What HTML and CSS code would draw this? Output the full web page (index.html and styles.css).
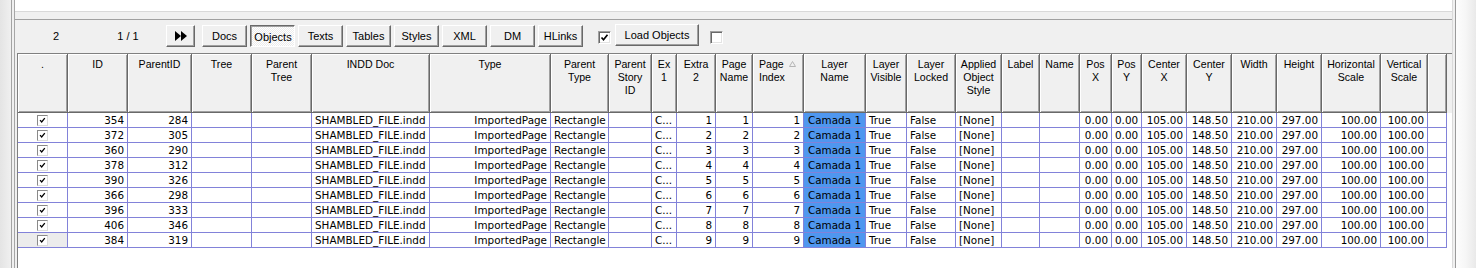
FILE: index.html
```html
<!DOCTYPE html>
<html>
<head>
<meta charset="utf-8">
<link rel="stylesheet" href="styles.css">
</head>
<body>
<div class="app">
  <div class="lside"></div>
  <div class="gap2"></div>
  <div class="main">
    <div class="memo"></div>
    <div class="spacer"></div>
    <div class="panel">
      <div class="toolbar">
        <div class="lbl lbl1">2</div>
        <div class="lbl lbl2">1 / 1</div>
        <div class="btn btn-nav"><svg width="12" height="10" viewBox="0 0 12 10"><polygon points="0,0 6,5 0,10"/><polygon points="6,0 12,5 6,10"/></svg></div>
        <div class="btn first">Docs</div>
        <div class="btn down">Objects</div>
        <div class="btn">Texts</div>
        <div class="btn">Tables</div>
        <div class="btn">Styles</div>
        <div class="btn">XML</div>
        <div class="btn">DM</div>
        <div class="btn">HLinks</div>
        <div class="tcb on"><svg viewBox="0 0 11 11"><path d="M2.5 5.5l2 2.2 4-5"/></svg></div>
        <div class="btn load">Load Objects</div>
        <div class="tcb off"></div>
      </div>
      <div class="grid">
        <div class="hrow">
          <div class="hc">.</div>
          <div class="hc">ID</div>
          <div class="hc">ParentID</div>
          <div class="hc">Tree</div>
          <div class="hc">Parent<br>Tree</div>
          <div class="hc">INDD Doc</div>
          <div class="hc">Type</div>
          <div class="hc">Parent<br>Type</div>
          <div class="hc">Parent<br>Story<br>ID</div>
          <div class="hc">Ex<br>1</div>
          <div class="hc">Extra<br>2</div>
          <div class="hc">Page<br>Name</div>
          <div class="hc hl-left">Page <svg class="sort" width="7" height="6" viewBox="0 0 7 6"><polygon points="3.5,0.5 6.5,5.5 0.5,5.5"/></svg><br>Index</div>
          <div class="hc">Layer<br>Name</div>
          <div class="hc">Layer<br>Visible</div>
          <div class="hc">Layer<br>Locked</div>
          <div class="hc">Applied<br>Object<br>Style</div>
          <div class="hc">Label</div>
          <div class="hc">Name</div>
          <div class="hc">Pos<br>X</div>
          <div class="hc">Pos<br>Y</div>
          <div class="hc">Center<br>X</div>
          <div class="hc">Center<br>Y</div>
          <div class="hc">Width</div>
          <div class="hc">Height</div>
          <div class="hc">Horizontal<br>Scale</div>
          <div class="hc">Vertical<br>Scale</div>
          <div class="hc"></div>
          <div class="hfill"></div>
        </div>

        <div class="drow">
          <div class="c ctr"><span class="cb"><svg viewBox="0 0 11 11"><path d="M2.5 5l2 2.2 3.8-4.6"/></svg></span></div>
          <div class="c r">354</div><div class="c r">284</div><div class="c"></div><div class="c"></div>
          <div class="c">SHAMBLED_FILE.indd</div><div class="c r">ImportedPage</div><div class="c">Rectangle</div><div class="c"></div><div class="c">C...</div>
          <div class="c r">1</div><div class="c r">1</div><div class="c r">1</div>
          <div class="c hl">Camada 1</div><div class="c">True</div><div class="c">False</div><div class="c">[None]</div><div class="c"></div><div class="c"></div>
          <div class="c r">0.00</div><div class="c r">0.00</div><div class="c r">105.00</div><div class="c r">148.50</div><div class="c r">210.00</div><div class="c r">297.00</div><div class="c r">100.00</div><div class="c r">100.00</div><div class="c"></div>
        </div>
        <div class="drow">
          <div class="c ctr"><span class="cb"><svg viewBox="0 0 11 11"><path d="M2.5 5l2 2.2 3.8-4.6"/></svg></span></div>
          <div class="c r">372</div><div class="c r">305</div><div class="c"></div><div class="c"></div>
          <div class="c">SHAMBLED_FILE.indd</div><div class="c r">ImportedPage</div><div class="c">Rectangle</div><div class="c"></div><div class="c">C...</div>
          <div class="c r">2</div><div class="c r">2</div><div class="c r">2</div>
          <div class="c hl">Camada 1</div><div class="c">True</div><div class="c">False</div><div class="c">[None]</div><div class="c"></div><div class="c"></div>
          <div class="c r">0.00</div><div class="c r">0.00</div><div class="c r">105.00</div><div class="c r">148.50</div><div class="c r">210.00</div><div class="c r">297.00</div><div class="c r">100.00</div><div class="c r">100.00</div><div class="c"></div>
        </div>
        <div class="drow">
          <div class="c ctr"><span class="cb"><svg viewBox="0 0 11 11"><path d="M2.5 5l2 2.2 3.8-4.6"/></svg></span></div>
          <div class="c r">360</div><div class="c r">290</div><div class="c"></div><div class="c"></div>
          <div class="c">SHAMBLED_FILE.indd</div><div class="c r">ImportedPage</div><div class="c">Rectangle</div><div class="c"></div><div class="c">C...</div>
          <div class="c r">3</div><div class="c r">3</div><div class="c r">3</div>
          <div class="c hl">Camada 1</div><div class="c">True</div><div class="c">False</div><div class="c">[None]</div><div class="c"></div><div class="c"></div>
          <div class="c r">0.00</div><div class="c r">0.00</div><div class="c r">105.00</div><div class="c r">148.50</div><div class="c r">210.00</div><div class="c r">297.00</div><div class="c r">100.00</div><div class="c r">100.00</div><div class="c"></div>
        </div>
        <div class="drow">
          <div class="c ctr"><span class="cb"><svg viewBox="0 0 11 11"><path d="M2.5 5l2 2.2 3.8-4.6"/></svg></span></div>
          <div class="c r">378</div><div class="c r">312</div><div class="c"></div><div class="c"></div>
          <div class="c">SHAMBLED_FILE.indd</div><div class="c r">ImportedPage</div><div class="c">Rectangle</div><div class="c"></div><div class="c">C...</div>
          <div class="c r">4</div><div class="c r">4</div><div class="c r">4</div>
          <div class="c hl">Camada 1</div><div class="c">True</div><div class="c">False</div><div class="c">[None]</div><div class="c"></div><div class="c"></div>
          <div class="c r">0.00</div><div class="c r">0.00</div><div class="c r">105.00</div><div class="c r">148.50</div><div class="c r">210.00</div><div class="c r">297.00</div><div class="c r">100.00</div><div class="c r">100.00</div><div class="c"></div>
        </div>
        <div class="drow">
          <div class="c ctr"><span class="cb"><svg viewBox="0 0 11 11"><path d="M2.5 5l2 2.2 3.8-4.6"/></svg></span></div>
          <div class="c r">390</div><div class="c r">326</div><div class="c"></div><div class="c"></div>
          <div class="c">SHAMBLED_FILE.indd</div><div class="c r">ImportedPage</div><div class="c">Rectangle</div><div class="c"></div><div class="c">C...</div>
          <div class="c r">5</div><div class="c r">5</div><div class="c r">5</div>
          <div class="c hl">Camada 1</div><div class="c">True</div><div class="c">False</div><div class="c">[None]</div><div class="c"></div><div class="c"></div>
          <div class="c r">0.00</div><div class="c r">0.00</div><div class="c r">105.00</div><div class="c r">148.50</div><div class="c r">210.00</div><div class="c r">297.00</div><div class="c r">100.00</div><div class="c r">100.00</div><div class="c"></div>
        </div>
        <div class="drow">
          <div class="c ctr"><span class="cb"><svg viewBox="0 0 11 11"><path d="M2.5 5l2 2.2 3.8-4.6"/></svg></span></div>
          <div class="c r">366</div><div class="c r">298</div><div class="c"></div><div class="c"></div>
          <div class="c">SHAMBLED_FILE.indd</div><div class="c r">ImportedPage</div><div class="c">Rectangle</div><div class="c"></div><div class="c">C...</div>
          <div class="c r">6</div><div class="c r">6</div><div class="c r">6</div>
          <div class="c hl">Camada 1</div><div class="c">True</div><div class="c">False</div><div class="c">[None]</div><div class="c"></div><div class="c"></div>
          <div class="c r">0.00</div><div class="c r">0.00</div><div class="c r">105.00</div><div class="c r">148.50</div><div class="c r">210.00</div><div class="c r">297.00</div><div class="c r">100.00</div><div class="c r">100.00</div><div class="c"></div>
        </div>
        <div class="drow">
          <div class="c ctr"><span class="cb"><svg viewBox="0 0 11 11"><path d="M2.5 5l2 2.2 3.8-4.6"/></svg></span></div>
          <div class="c r">396</div><div class="c r">333</div><div class="c"></div><div class="c"></div>
          <div class="c">SHAMBLED_FILE.indd</div><div class="c r">ImportedPage</div><div class="c">Rectangle</div><div class="c"></div><div class="c">C...</div>
          <div class="c r">7</div><div class="c r">7</div><div class="c r">7</div>
          <div class="c hl">Camada 1</div><div class="c">True</div><div class="c">False</div><div class="c">[None]</div><div class="c"></div><div class="c"></div>
          <div class="c r">0.00</div><div class="c r">0.00</div><div class="c r">105.00</div><div class="c r">148.50</div><div class="c r">210.00</div><div class="c r">297.00</div><div class="c r">100.00</div><div class="c r">100.00</div><div class="c"></div>
        </div>
        <div class="drow">
          <div class="c ctr"><span class="cb"><svg viewBox="0 0 11 11"><path d="M2.5 5l2 2.2 3.8-4.6"/></svg></span></div>
          <div class="c r">406</div><div class="c r">346</div><div class="c"></div><div class="c"></div>
          <div class="c">SHAMBLED_FILE.indd</div><div class="c r">ImportedPage</div><div class="c">Rectangle</div><div class="c"></div><div class="c">C...</div>
          <div class="c r">8</div><div class="c r">8</div><div class="c r">8</div>
          <div class="c hl">Camada 1</div><div class="c">True</div><div class="c">False</div><div class="c">[None]</div><div class="c"></div><div class="c"></div>
          <div class="c r">0.00</div><div class="c r">0.00</div><div class="c r">105.00</div><div class="c r">148.50</div><div class="c r">210.00</div><div class="c r">297.00</div><div class="c r">100.00</div><div class="c r">100.00</div><div class="c"></div>
        </div>
        <div class="drow">
          <div class="c ctr cur"><span class="cb"><svg viewBox="0 0 11 11"><path d="M2.5 5l2 2.2 3.8-4.6"/></svg></span></div>
          <div class="c r">384</div><div class="c r">319</div><div class="c"></div><div class="c"></div>
          <div class="c">SHAMBLED_FILE.indd</div><div class="c r">ImportedPage</div><div class="c">Rectangle</div><div class="c"></div><div class="c">C...</div>
          <div class="c r">9</div><div class="c r">9</div><div class="c r">9</div>
          <div class="c hl">Camada 1</div><div class="c">True</div><div class="c">False</div><div class="c">[None]</div><div class="c"></div><div class="c"></div>
          <div class="c r">0.00</div><div class="c r">0.00</div><div class="c r">105.00</div><div class="c r">148.50</div><div class="c r">210.00</div><div class="c r">297.00</div><div class="c r">100.00</div><div class="c r">100.00</div><div class="c"></div>
        </div>
      </div>
    </div>
  </div>
  <div class="rside">
    <div class="rgap"></div>
    <div class="rline"></div>
    <div class="rshade"></div>
  </div>
</div>
</body>
</html>
```

FILE: styles.css
```css
* { box-sizing: border-box; }

body {
  margin: 0;
  width: 1476px;
  height: 268px;
  overflow: hidden;
  background: #f0f0f0;
  font-family: "Liberation Sans", Arial, sans-serif;
  font-size: 11px;
  color: #000;
}

.app {
  display: flex;
  height: 268px;
}

.lside {
  width: 12px;
  background: linear-gradient(to right, #e4e4e4, #f0f0f0);
  border-right: 1px solid #a3a3a3;
}

.gap2 {
  width: 2px;
  background: #f0f0f0;
}

.main {
  width: 1439px;
  display: flex;
  flex-direction: column;
  border-left: 1px solid #a6a6a6;
  border-right: 1px solid #dadada;
}

.memo {
  height: 12px;
  background: #fff;
  border-bottom: 1px solid #d9d9d9;
}

.spacer {
  height: 7px;
}

.panel {
  flex: 1;
  display: flex;
  flex-direction: column;
  border-top: 1px solid #a0a0a0;
  min-height: 0;
}

.toolbar {
  height: 33px;
  display: flex;
  align-items: flex-start;
  padding-top: 5px;
}

.lbl {
  height: 22px;
  line-height: 22px;
  text-align: center;
  font-size: 11px;
}

.lbl1 { width: 82px; }
.lbl2 { width: 62px; }

.btn {
  width: 45px;
  height: 22px;
  margin-left: 3px;
  display: flex;
  align-items: center;
  justify-content: center;
  background: #f0f0f0;
  border: 1px solid;
  border-color: #fff #696969 #696969 #fff;
  box-shadow: inset -1px -1px 0 #a0a0a0;
  font-size: 11px;
}

.btn-nav {
  width: 29px;
  margin-left: 7px;
}

.btn-nav svg { fill: #000; margin-left: 1px; }

.btn.first { margin-left: 7px; }

.btn.down {
  border-color: #696969 #fff #fff #696969;
  box-shadow: inset 1px 1px 0 #a0a0a0;
  background: repeating-conic-gradient(#fff 0 25%, #ececec 0 50%) 0 0 / 2px 2px;
  padding: 2px 0 0 1px;
}

.btn.load {
  width: 84px;
  margin-left: 4px;
  margin-top: -1px;
}

.tcb {
  width: 13px;
  height: 13px;
  margin-top: 6px;
  background: #fff;
  border: 1px solid;
  border-color: #a0a0a0 #fff #fff #a0a0a0;
  box-shadow: inset 1px 1px 0 #696969, inset -1px -1px 0 #e3e3e3;
}

.tcb.on { margin-left: 15px; }
.tcb.off { margin-left: 11px; }

.tcb svg {
  display: block;
  width: 11px;
  height: 11px;
  fill: none;
  stroke: #000;
  stroke-width: 1.7;
}

.grid {
  flex: 1;
  margin-left: 2px;
  background: #fff;
  border-left: 1px solid #808080;
  border-top: 1px solid #808080;
  --cols: 50px 60px 64px 60px 60px 118px 121px 58px 43px 25px 39px 37px 51px 62px 41px 49px 46px 38px 40px 32px 30px 45px 45px 45px 45px 59px 47px 19px;
}

.hrow {
  display: grid;
  grid-template-columns: var(--cols) 1fr;
  height: 59px;
  background: #f0f0f0;
}

.hc {
  height: 59px;
  border-right: 1px solid #696969;
  border-bottom: 1px solid #696969;
  box-shadow: inset 1px 1px 0 #fff, inset -1px -1px 0 #a0a0a0;
  text-align: center;
  font-size: 10.6px;
  line-height: 13px;
  padding-top: 4px;
  white-space: nowrap;
  overflow: hidden;
}

.hc.hl-left {
  text-align: left;
  padding-left: 6px;
}

.sort {
  fill: none;
  stroke: #b4b4b4;
  stroke-width: 1;
  margin-left: 2px;
  vertical-align: 1px;
}

.hfill { background: #f0f0f0; }

.drow {
  display: grid;
  grid-template-columns: var(--cols);
  height: 15px;
}

.c {
  height: 15px;
  border-right: 1px solid #8282d9;
  border-bottom: 1px solid #8282d9;
  font-family: "DejaVu Sans", Verdana, sans-serif;
  font-size: 10.4px;
  line-height: 14px;
  padding: 0 3px;
  white-space: nowrap;
  overflow: hidden;
}

.c.r { text-align: right; }

.c.ctr {
  display: flex;
  justify-content: center;
  padding: 2px 0 0 0;
}

.c.cur { background: #ececec; }

.c.hl {
  background: #4f97ef;
  padding-left: 4px;
}

.cb {
  display: block;
  width: 11px;
  height: 11px;
  background: #fff;
  border: 1px solid;
  border-color: #8a8a8a #dcdcdc #dcdcdc #8a8a8a;
}

.cb svg {
  display: block;
  width: 9px;
  height: 9px;
  fill: none;
  stroke: #000;
  stroke-width: 1.6;
}

.rside {
  flex: 1;
  display: flex;
}

.rgap {
  width: 2px;
  background: #f0f0f0;
}

.rline {
  width: 1px;
  background: #9a9a9a;
}

.rshade {
  flex: 1;
  background: linear-gradient(to right, #fdfdfd, #f6f6f6 50%, #e9e9e9);
}
```
